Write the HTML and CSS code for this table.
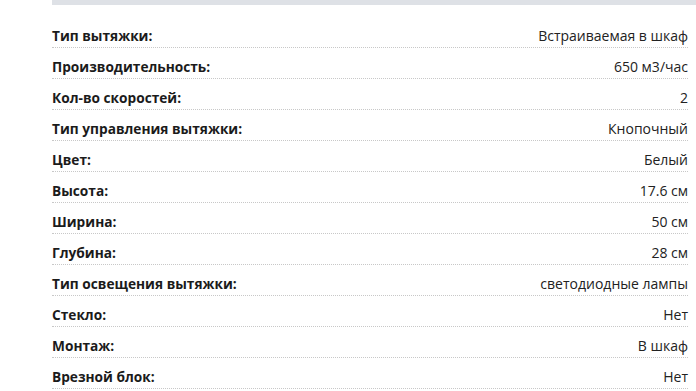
FILE: index.html
```html
<!DOCTYPE html>
<html lang="ru">
<head>
<meta charset="utf-8">
<link rel="stylesheet" href="styles.css">
</head>
<body>
<div class="page">
  <div class="topbar"></div>
  <ul class="specs">
    <li class="row"><span class="label">Тип вытяжки:</span><span class="value">Встраиваемая в шкаф</span></li>
    <li class="row"><span class="label">Производительность:</span><span class="value">650 м3/час</span></li>
    <li class="row"><span class="label">Кол-во скоростей:</span><span class="value">2</span></li>
    <li class="row"><span class="label">Тип управления вытяжки:</span><span class="value">Кнопочный</span></li>
    <li class="row"><span class="label">Цвет:</span><span class="value">Белый</span></li>
    <li class="row"><span class="label">Высота:</span><span class="value">17.6 см</span></li>
    <li class="row"><span class="label">Ширина:</span><span class="value">50 см</span></li>
    <li class="row"><span class="label">Глубина:</span><span class="value">28 см</span></li>
    <li class="row"><span class="label">Тип освещения вытяжки:</span><span class="value">светодиодные лампы</span></li>
    <li class="row"><span class="label">Стекло:</span><span class="value">Нет</span></li>
    <li class="row"><span class="label">Монтаж:</span><span class="value">В шкаф</span></li>
    <li class="row"><span class="label">Врезной блок:</span><span class="value">Нет</span></li>
  </ul>
</div>
</body>
</html>
```
FILE: styles.css
```css
html, body {
  margin: 0;
  padding: 0;
  background: #ffffff;
}
body {
  font-family: "Open Sans", "Noto Sans", "Liberation Sans", sans-serif;
  color: #222222;
  overflow: hidden;
}
.page {
  padding-left: 52px;
}
.topbar {
  height: 5px;
  background: #dee1e6;
}
.specs {
  list-style: none;
  margin: 0;
  padding: 12px 8px 0 0;
}
.row {
  display: flex;
  justify-content: space-between;
  align-items: flex-end;
  height: 28px;
  padding-bottom: 2px;
  border-bottom: 1px dotted #c8c8c8;
  font-size: 14px;
  line-height: 19px;
}
.label {
  font-weight: 700;
  font-size: 13.7px;
  color: #1b1b1b;
}
.value {
  font-weight: 400;
  color: #222222;
}
```
